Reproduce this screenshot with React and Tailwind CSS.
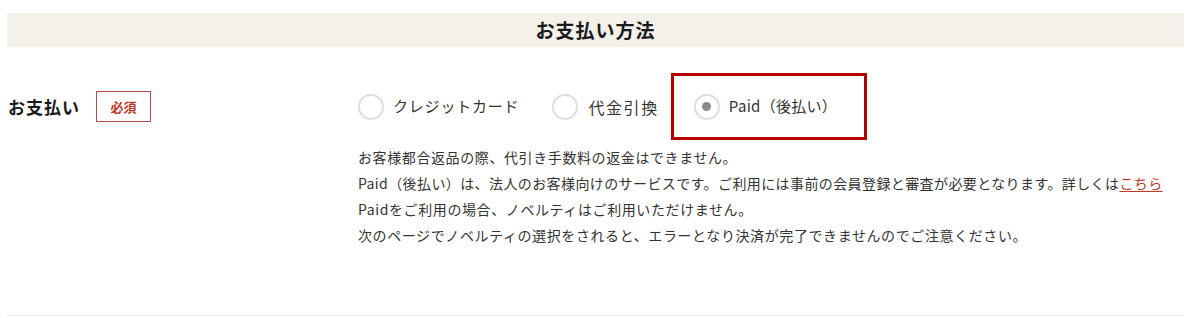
import React from "react";

const options = [
  { id: "credit", label: "クレジットカード", cls: "text-[15px] tracking-[0.8px]" },
  { id: "cod", label: "代金引換", cls: "text-[16px] tracking-[1.6px]" },
  { id: "paid", label: "Paid（後払い）", cls: "text-[15px] tracking-[0.3px]", checked: true },
];

function Radio({ checked }) {
  return (
    <span className="flex h-[26px] w-[26px] shrink-0 items-center justify-center rounded-full border-2 border-[#dedede] bg-white">
      {checked && <span className="h-[9px] w-[9px] rounded-full bg-[#8a8a8a]" />}
    </span>
  );
}

function Notes() {
  return (
    <div className="mt-1 text-[14px] leading-[26px] tracking-[0.6px] text-[#333]">
      <p>お客様都合返品の際、代引き手数料の返金はできません。</p>
      <p className="tracking-[0.4px]">
        Paid（後払い）は、法人のお客様向けのサービスです。ご利用には事前の会員登録と審査が必要となります。詳しくは
        <a className="text-[#c0392b] underline underline-offset-2">こちら</a>
      </p>
      <p>Paidをご利用の場合、ノベルティはご利用いただけません。</p>
      <p>次のページでノベルティの選択をされると、エラーとなり決済が完了できませんのでご注意ください。</p>
    </div>
  );
}

export default function App() {
  return (
    <div
      className="min-h-[318px] bg-white px-[7px] pt-[13px] text-[#222]"
      style={{ fontFamily: '"Noto Sans CJK JP", "Noto Sans", sans-serif' }}
    >
      <div className="flex h-[34px] items-center justify-center bg-[#f4f0ea]">
        <h2 className="text-[19px] font-bold tracking-[1px] text-[#1a1a1a]">お支払い方法</h2>
      </div>

      <div className="mt-[26px] flex border-b border-[#eeeeee] pb-[67px]">
        <div className="flex h-[67px] w-[351px] shrink-0 items-center">
          <span className="ml-[1px] text-[17px] font-bold tracking-[1px] text-[#1a1a1a]">お支払い</span>
          <span className="ml-[16px] flex h-[31px] w-[55px] items-center justify-center border border-[#b5484a] text-[13px] font-bold text-[#c0392b]">
            必須
          </span>
        </div>

        <div className="flex flex-col">
          <div className="flex items-center">
            <label className="flex items-center gap-[9px]">
              <Radio />
              <span className={`${options[0].cls} text-[#333]`}>{options[0].label}</span>
            </label>
            <label className="ml-[33px] flex items-center gap-[10px]">
              <Radio />
              <span className={`${options[1].cls} text-[#333]`}>{options[1].label}</span>
            </label>
            <label className="ml-[12px] flex h-[67px] items-center gap-[9px] border-[3px] border-[#b30000] pl-[20px] pr-[27px]">
              <Radio checked />
              <span className={`${options[2].cls} text-[#333]`}>{options[2].label}</span>
            </label>
          </div>
          <Notes />
        </div>
      </div>
    </div>
  );
}
